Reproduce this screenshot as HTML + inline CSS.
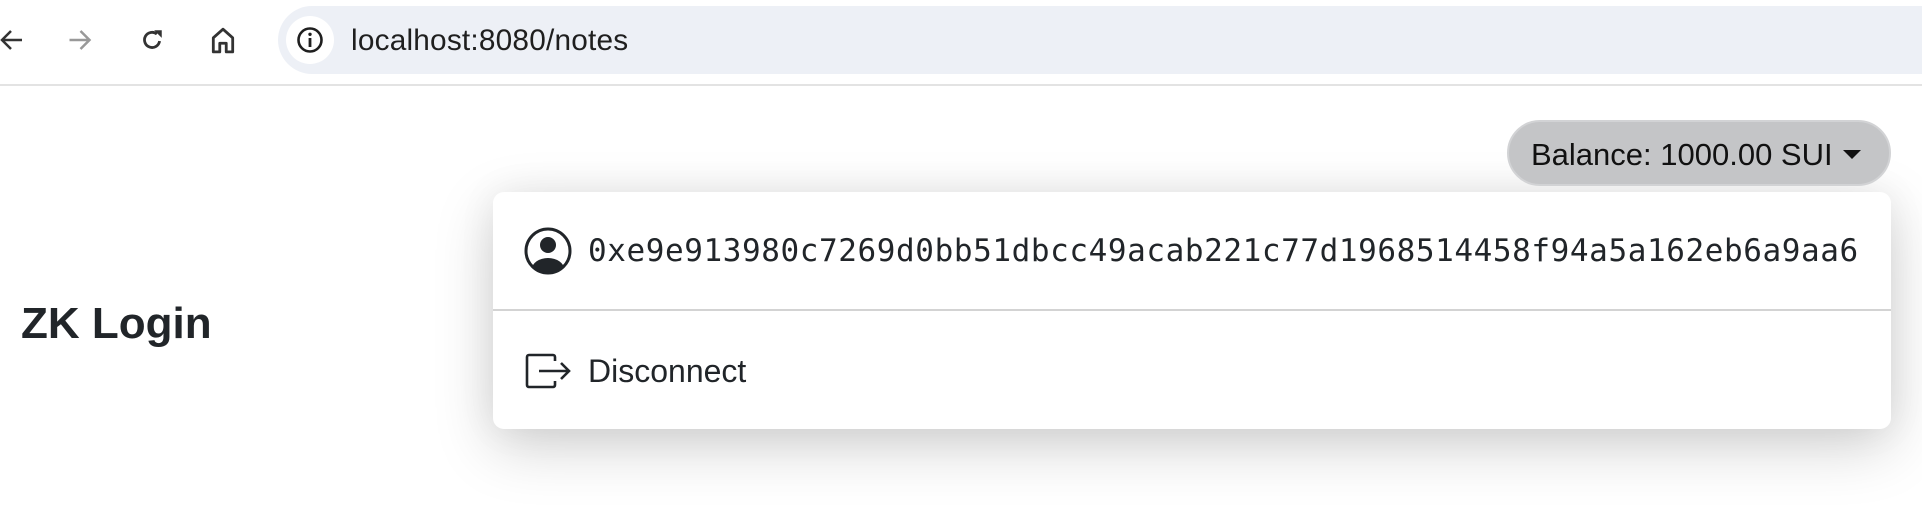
<!DOCTYPE html>
<html><head><meta charset="utf-8"><style>
*{margin:0;padding:0;box-sizing:border-box}
body{width:1922px;height:508px;background:#fff;position:relative;overflow:hidden;font-family:"Liberation Sans",Arial,sans-serif;color:#212529}
.nav{position:absolute;left:0;top:0;width:1922px;height:86px;border-bottom:2px solid #e3e3e3;background:#fff}
.url{position:absolute;left:278px;top:6px;width:1700px;height:68px;border-radius:34px;background:#edf0f6}
.info{position:absolute;left:286px;top:16px;width:48px;height:48px;border-radius:24px;background:#fff}
.urltxt{position:absolute;left:351px;top:24px;font-size:29.8px;color:#1f1f1f;letter-spacing:0.2px}
.zk{position:absolute;left:21px;top:299px;font-size:44px;font-weight:bold;color:#212529}
.bal{position:absolute;left:1507px;top:120px;width:384px;height:66px;border-radius:33px;background:#c4c5c7;border:2px solid #d2d3d5;font-size:31px;line-height:66px;padding-left:22px;color:#111;white-space:nowrap}
.caret{display:inline-block;vertical-align:middle;margin-left:10px;margin-top:-4px;width:0;height:0;border-left:9px solid transparent;border-right:9px solid transparent;border-top:9px solid #111}
.dd{position:absolute;left:493px;top:192px;width:1398px;height:237px;background:#fff;border-radius:11px;box-shadow:0 18px 60px rgba(0,0,0,0.18),0 0 40px rgba(0,0,0,0.06)}
.div{position:absolute;left:0;top:117px;width:100%;height:2px;background:#d3d3d3}
.addr{position:absolute;left:95px;top:41px;font-family:"DejaVu Sans Mono","Liberation Mono",monospace;font-size:31px;letter-spacing:0.59px;color:#212529;white-space:nowrap}
.disc{position:absolute;left:95px;top:161px;font-size:32px;color:#212529}
</style></head><body>
<div class="nav">
<svg style="position:absolute;left:0;top:28px" width="24" height="24" viewBox="0 0 24 24"><path d="M22 12H2M11 3l-9 9 9 9" fill="none" stroke="#333" stroke-width="2.5"/></svg>
<svg style="position:absolute;left:67px;top:28px" width="25" height="24" viewBox="0 0 24 24"><path d="M2 12h20M13 3l9 9-9 9" fill="none" stroke="#999" stroke-width="2.5"/></svg>
<svg style="position:absolute;left:139px;top:27px" width="26" height="26" viewBox="0 0 24 24"><path d="M19 13a7 7 0 1 1-2.5-6.5" fill="none" stroke="#333" stroke-width="2.6"/><path d="M14 3h7v7z" fill="#333"/></svg>
<svg style="position:absolute;left:210px;top:26px" width="26" height="28" viewBox="0 0 24 26"><path d="M3 11L12 3l9 8v13h-6v-8H9v8H3z" fill="none" stroke="#333" stroke-width="2.6" stroke-linejoin="round"/></svg>
<div class="url"></div>
<div class="info"><svg style="position:absolute;left:10px;top:10px" width="28" height="28" viewBox="0 0 28 28"><circle cx="14" cy="14" r="11.5" fill="none" stroke="#1f1f1f" stroke-width="2.6"/><rect x="12.6" y="12" width="2.8" height="9" fill="#1f1f1f"/><circle cx="14" cy="8.3" r="1.7" fill="#1f1f1f"/></svg></div>
<div class="urltxt">localhost:8080/notes</div>
</div>
<div class="zk">ZK Login</div>
<div class="dd">
<svg style="position:absolute;left:31px;top:35px" width="48" height="48" viewBox="0 0 48 48"><defs><clipPath id="c"><circle cx="24" cy="24" r="21"/></clipPath></defs><circle cx="24" cy="24" r="22" fill="none" stroke="#212529" stroke-width="3"/><circle cx="24" cy="18" r="8" fill="#212529"/><ellipse cx="24" cy="42" rx="16" ry="11" fill="#212529" clip-path="url(#c)"/></svg>
<div class="addr">0xe9e913980c7269d0bb51dbcc49acab221c77d1968514458f94a5a162eb6a9aa6</div>
<div class="div"></div>
<svg style="position:absolute;left:32px;top:161px" width="48" height="36" viewBox="0 0 48 36"><path d="M30 8V4a2 2 0 0 0-2-2H4a2 2 0 0 0-2 2v28a2 2 0 0 0 2 2h24a2 2 0 0 0 2-2v-4" fill="none" stroke="#212529" stroke-width="2.6"/><path d="M14 18h30M36 10l8 8-8 8" fill="none" stroke="#212529" stroke-width="2.6"/></svg>
<div class="disc">Disconnect</div>
</div>
<div class="bal">Balance: 1000.00 SUI<span class="caret"></span></div>
</body></html>
